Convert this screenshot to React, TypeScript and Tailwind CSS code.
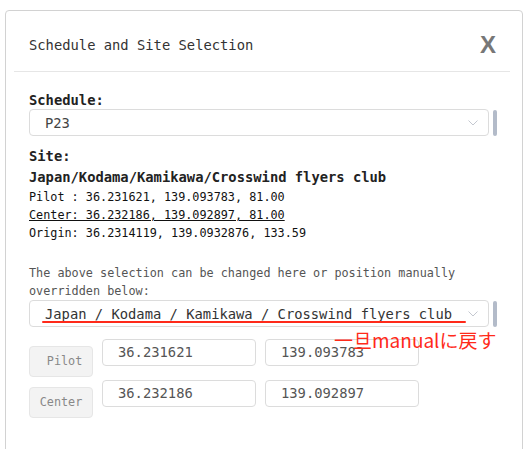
import React from "react";

const mono = { fontFamily: '"DejaVu Sans Mono", "Liberation Mono", monospace' };

function Chevron() {
  return (
    <svg width="10" height="6" viewBox="0 0 10 6" className="shrink-0">
      <path d="M0.5 0.5 L5 5 L9.5 0.5" fill="none" stroke="#c4c8d0" strokeWidth="1" />
    </svg>
  );
}

function SelectBox({ text, dark }: { text: string; dark?: boolean }) {
  return (
    <div className="flex items-center">
      <div className="flex-1 h-[27px] border border-[#dcdcdc] rounded-[4px] bg-white flex items-center justify-between pl-[15px] pr-[10px]">
        <span className={`text-[13.8px] leading-[18px] whitespace-pre ${dark ? "text-[#333]" : "text-[#444]"}`}>{text}</span>
        <Chevron />
      </div>
      <div className="w-[4px] h-[26px] ml-[4px] rounded-[2px] bg-[#b3bbc9]" />
    </div>
  );
}

function Row({ label, a, b }: { label: string; a: string; b: string }) {
  return (
    <div className="flex items-start">
      <div className="mt-[7px] w-[64px] h-[31px] rounded-[4px] bg-[#f3f3f3] border border-[#e6e6e6] flex items-center justify-center text-[11.8px] text-[#888] whitespace-pre">
        {label}
      </div>
      <div className="ml-[9px] w-[154px] h-[27px] border border-[#dcdcdc] rounded-[4px] bg-white flex items-center pl-[15px] text-[13.8px] text-[#555]">
        {a}
      </div>
      <div className="ml-[9px] w-[154px] h-[27px] border border-[#dcdcdc] rounded-[4px] bg-white flex items-center pl-[15px] text-[13.8px] text-[#555]">
        {b}
      </div>
    </div>
  );
}

export default function App() {
  return (
    <div className="w-[528px] h-[449px] overflow-hidden bg-white" style={mono}>
      <div className="ml-[5px] mt-[10px] w-[518px] h-[460px] border border-[#d2d2d2] rounded-[4px] bg-white">
        <div className="ml-[8px] mr-[12px] border-b border-[#e6e6e6] pl-[15px] pr-[14px] pt-[25px] pb-[17px] flex items-center justify-between">
          <span className="text-[13.8px] leading-[18px] text-[#333]">Schedule and Site Selection</span>
          <span
            className="text-[24px] leading-[18px] font-bold text-[#777]"
            style={{ fontFamily: '"Liberation Sans", Arial, sans-serif' }}
          >
            X
          </span>
        </div>
        <div className="pl-[23px] pr-[25px] pt-[19px] relative">
          <div className="text-[13.8px] leading-[18px] font-bold text-[#222]">Schedule:</div>
          <SelectBox text="P23" />
          <div className="mt-[10px] text-[13.8px] leading-[21px] font-bold text-[#222]">Site:</div>
          <div className="text-[13.8px] leading-[21px] font-bold text-[#222]">Japan/Kodama/Kamikawa/Crosswind flyers club</div>
          <div className="text-[11.8px] leading-[18px] text-[#111]">
            <div>Pilot : 36.231621, 139.093783, 81.00</div>
            <div className="underline">Center: 36.232186, 139.092897, 81.00</div>
            <div>Origin: 36.2314119, 139.0932876, 133.59</div>
          </div>
          <div className="mt-[22px] text-[11.8px] leading-[18px] text-[#555]">
            <div>The above selection can be changed here or position manually</div>
            <div>overridden below:</div>
          </div>
          <SelectBox text="Japan / Kodama / Kamikawa / Crosswind flyers club" dark />
          <div className="mt-[12px] flex flex-col gap-[3px]">
            <Row label=" Pilot" a="36.231621" b="139.093783" />
            <Row label="Center" a="36.232186" b="139.092897" />
          </div>
          <div className="absolute left-[36px] top-[249px] w-[424px] h-[2px] bg-[#ff2a1a] rounded-full" />
          <div
            className="absolute left-[328px] top-[257px] text-[19px] leading-[22px] text-[#ff2a1a] whitespace-nowrap"
            style={{ fontFamily: '"Noto Sans CJK JP", "Noto Sans", sans-serif' }}
          >
            一旦manualに戻す
          </div>
        </div>
      </div>
    </div>
  );
}
